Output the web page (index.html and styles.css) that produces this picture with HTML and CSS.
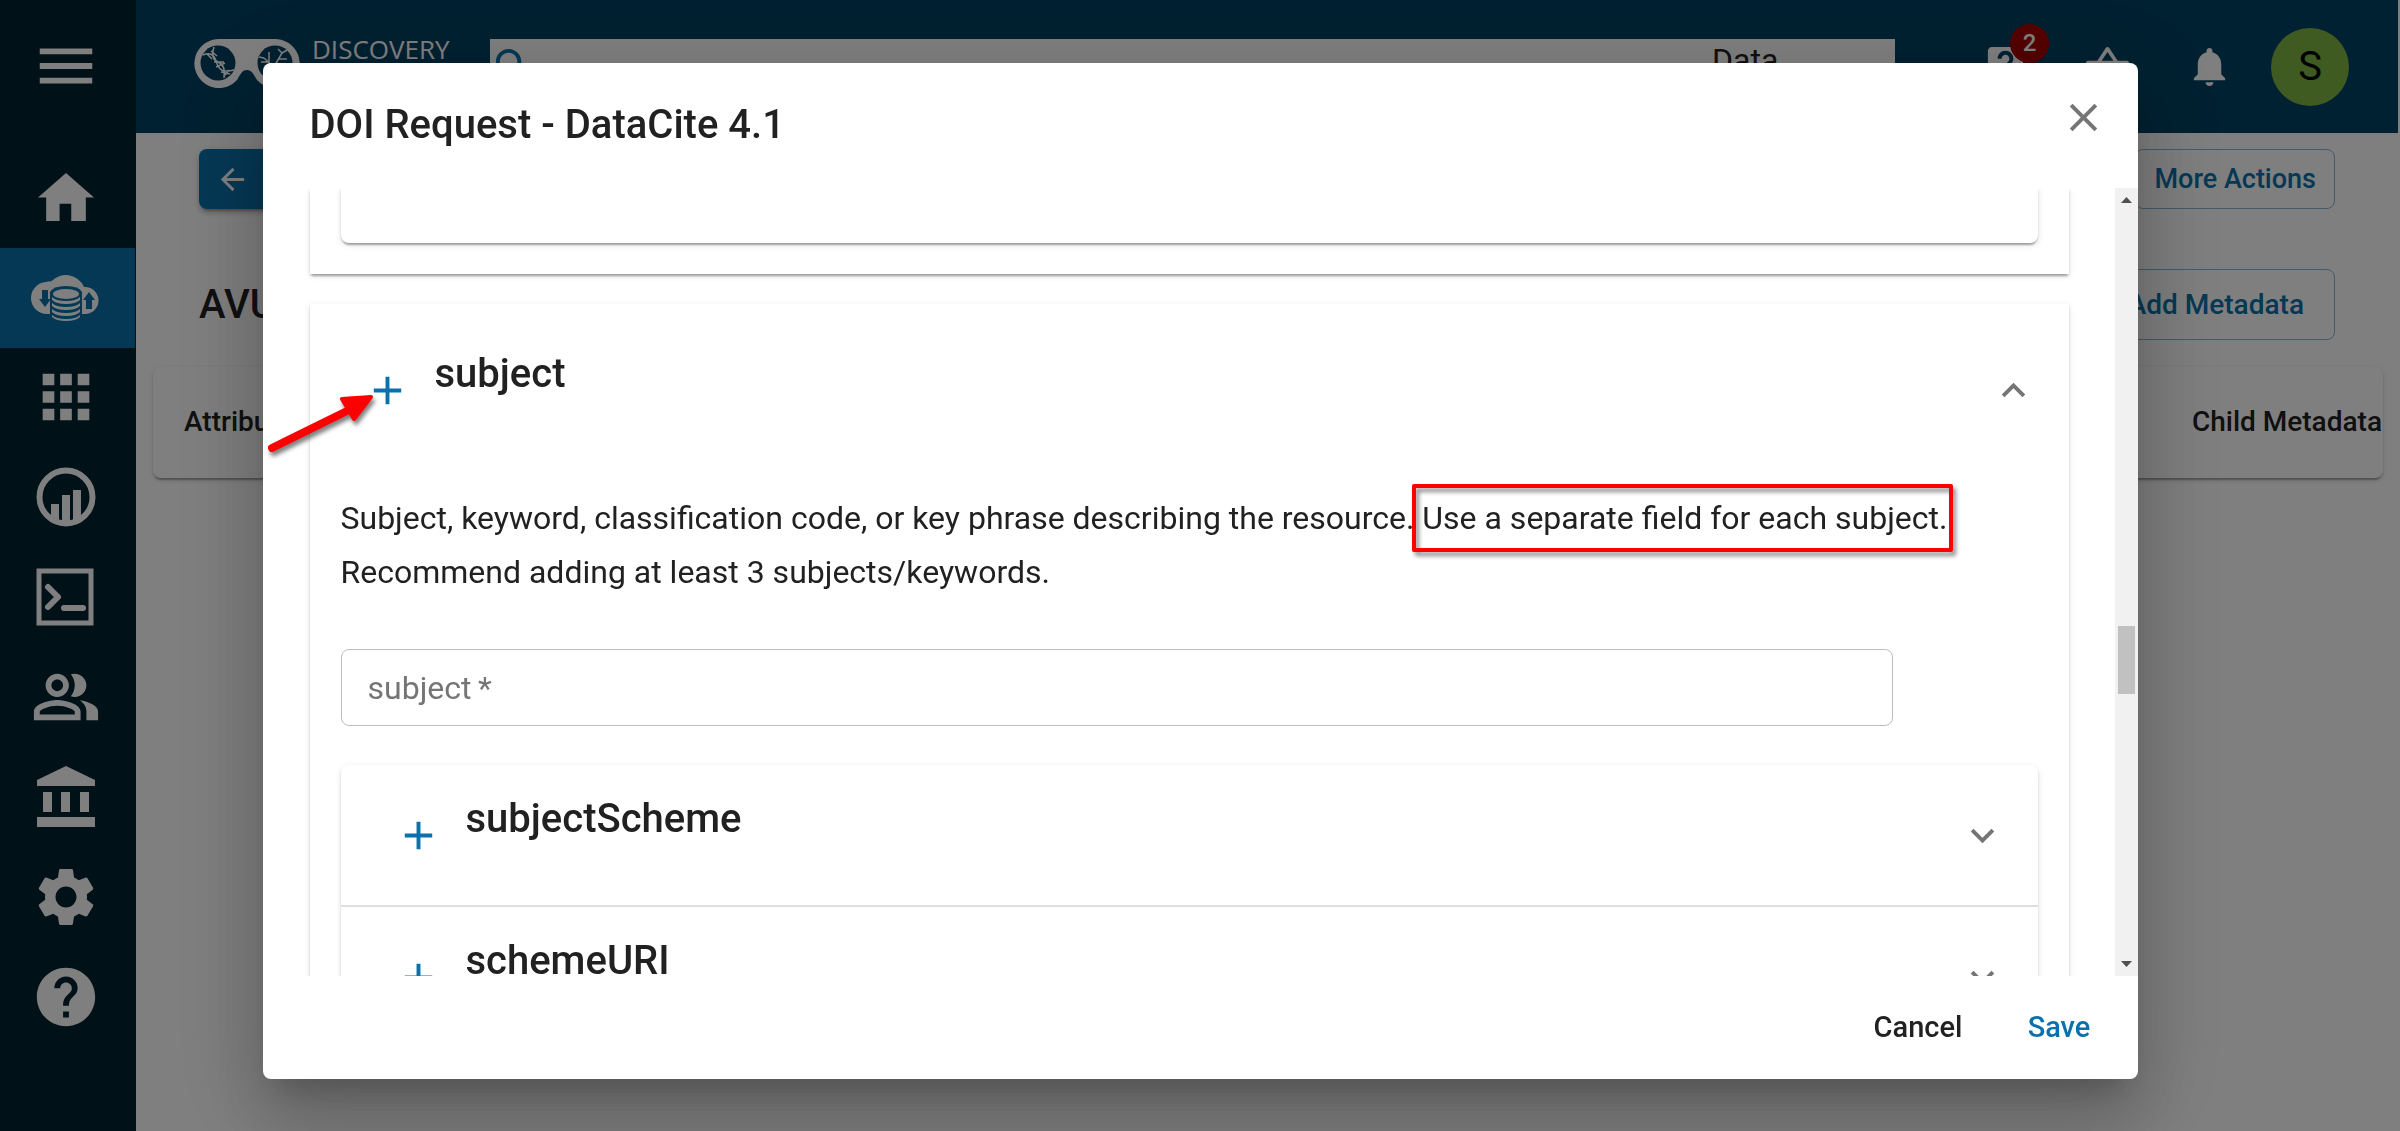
FILE: index.html
```html
<!DOCTYPE html>
<html lang="en">
<head>
<meta charset="utf-8">
<title>DOI Request - DataCite 4.1</title>
<link rel="stylesheet" href="styles.css">
</head>
<body>
<div class="app">
  <nav class="sidebar" aria-label="Main">
    <button class="menu-button" aria-label="Menu"><svg class="nav-icon" viewBox="0 0 24 24"><path d="M3 18h18v-2H3v2zm0-5h18v-2H3v2zm0-7v2h18V6H3z"/></svg></button>
    <a class="nav-link" href="#home" aria-label="Home"><svg class="nav-icon" viewBox="0 0 24 24"><path d="M9.8 20.2v-5.9h4v5.9h5v-8h2.8L12 3.8 2.4 12.2h2.8v8z"/></svg></a>
    <a class="nav-link active" href="#data" aria-label="Data"><svg class="nav-icon" viewBox="0 0 70 70">
      <path d="M17 52A16 16 0 0 1 15 20Q18 19 20 19.500A20 20 0 0 1 53 25A13.500 13.500 0 0 1 55 52Z"/>
      <g class="cut"><path d="M11 28h6v9h3l-6 8-6-8h3zM55 47h6v-9h3l-6-8-6 8h3z"/><path d="M19 30q3-6 16-6t16 6v23q-3 6-16 6t-16-6z"/></g>
      <ellipse cx="35" cy="32" rx="13" ry="5"/>
      <path d="M21 35q4 4 14 4t14-4v3q-4 4-14 4t-14-4zM21 41q4 4 14 4t14-4v3q-4 4-14 4t-14-4zM21 47q4 4 14 4t14-4v3q-4 4-14 4t-14-4zM21 53q4 4 14 4t14-4v2q-4 4-14 4t-14-4z"/></svg></a>
    <a class="nav-link" href="#apps" aria-label="Apps"><svg class="nav-icon" viewBox="0 0 24 24"><path d="M4 8h4V4H4v4zm6 12h4v-4h-4v4zm-6 0h4v-4H4v4zm0-6h4v-4H4v4zm6 0h4v-4h-4v4zm6-10v4h4V4h-4zm-6 4h4V4h-4v4zm6 6h4v-4h-4v4zm0 6h4v-4h-4v4z"/></svg></a>
    <a class="nav-link" href="#analyses" aria-label="Analyses"><svg class="nav-icon" viewBox="0 0 70 70"><circle cx="35" cy="35" r="26.500" fill="none" stroke="#fff" stroke-width="6"/><path d="M20 42h8v16l-8-4zM31 33h8v28h-8zM42 28h8v26l-8 5z"/></svg></a>
    <a class="nav-link" href="#vice" aria-label="Terminal"><svg class="nav-icon" viewBox="0 0 70 70"><g fill="none" stroke="#fff" stroke-width="5"><path d="M8 9h52v52H8z"/><path d="M17 25l10 10-10 10M33 46h19" stroke-width="6" stroke-linecap="round" stroke-linejoin="round"/></g></svg></a>
    <a class="nav-link" href="#teams" aria-label="Teams"><svg class="nav-icon" viewBox="0 0 24 24"><path d="M16.670 13.130C18.040 14.060 19 15.320 19 17v3h4v-3c0-2.180-3.570-3.470-6.330-3.870zM15 12c2.210 0 4-1.790 4-4s-1.790-4-4-4c-.47 0-.91.1-1.330.24C14.500 5.270 15 6.580 15 8s-.5 2.730-1.330 3.760c.42.140.86.240 1.330.240zM9 12c2.210 0 4-1.790 4-4s-1.790-4-4-4-4 1.790-4 4 1.790 4 4 4zm0-6c1.100 0 2 .9 2 2s-.9 2-2 2-2-.9-2-2 .9-2 2-2zM9 13c-2.670 0-8 1.340-8 4v3h16v-3c0-2.660-5.330-4-8-4zm6 5H3v-.99C3.200 16.290 6.300 15 9 15s5.800 1.290 6 2v1z"/></svg></a>
    <a class="nav-link" href="#collections" aria-label="Collections"><svg class="nav-icon" viewBox="0 0 70 70"><path d="M35 4L64 18v6H6v-6zM12 30h9v20h-9zM30 30h9v20h-9zM49 30h9v20h-9zM6 55h58v10H6z"/></svg></a>
    <a class="nav-link" href="#settings" aria-label="Settings"><svg class="nav-icon" viewBox="0 0 24 24"><path d="M19.140 12.940c.04-.3.060-.61.060-.94 0-.32-.02-.64-.07-.94l2.030-1.580c.18-.14.230-.41.120-.61l-1.920-3.320c-.12-.22-.37-.29-.59-.22l-2.390.96c-.5-.38-1.030-.7-1.620-.94l-.36-2.540c-.04-.24-.24-.41-.48-.41h-3.840c-.24 0-.43.170-.47.410l-.36 2.540c-.59.240-1.130.57-1.620.94l-2.390-.96c-.22-.08-.47 0-.59.220L2.740 8.870c-.12.210-.08.470.120.610l2.030 1.580c-.05.3-.09.63-.09.940s.02.640.070.940l-2.030 1.580c-.18.140-.23.410-.12.610l1.920 3.320c.12.220.37.290.59.220l2.390-.96c.5.380 1.030.7 1.620.94l.36 2.540c.05.240.24.410.48.410h3.840c.24 0 .44-.17.47-.41l.36-2.540c.59-.24 1.130-.56 1.620-.94l2.390.96c.22.080.47 0 .59-.22l1.920-3.320c.12-.22.070-.47-.12-.61l-2.010-1.580zM12 15.600c-1.980 0-3.600-1.620-3.600-3.600s1.620-3.600 3.600-3.600 3.600 1.620 3.600 3.600-1.620 3.600-3.600 3.600z"/></svg></a>
    <a class="nav-link" href="#help" aria-label="Help"><svg class="nav-icon" viewBox="0 0 24 24"><path d="M12 2C6.480 2 2 6.480 2 12s4.480 10 10 10 10-4.480 10-10S17.520 2 12 2zm1 17h-2v-2h2v2zm2.070-7.750l-.9.920C13.450 12.900 13 13.500 13 15h-2v-.5c0-1.100.45-2.100 1.170-2.830l1.240-1.260c.37-.36.590-.86.590-1.410 0-1.100-.9-2-2-2s-2 .9-2 2H8c0-2.210 1.790-4 4-4s4 1.790 4 4c0 .88-.36 1.680-.93 2.250z"/></svg></a>
  </nav>

  <div class="page">
    <header class="topbar">
      <a class="brand" href="#" aria-label="Discovery">
        <svg class="brand-mark" viewBox="0 0 106 49">
          <path fill="#fff" d="M25 0H81A24.500 24.500 0 1 1 63 41C60 36 58 31 53 31S46 36 43 41A24.500 24.500 0 1 1 25 0Z"/>
          <circle class="lens" cx="24" cy="24" r="17.500"/><circle class="lens" cx="81" cy="24" r="17.500"/>
          <g fill="none" stroke="#fff" stroke-width="1.500"><path d="M9 16Q19 12 22 22T31 32T40 31M20 8Q16 20 24 23T30 39M13 15l5 5M17 12l6 5M20 23l10 0M22 28l9-4M27 33l9 2M30 37l5-6"/><path d="M81 40V25M81 29L70 19M75 23V13M75 23H67M81 26L88 14M85 20h8M88 14l-4-4M88 14l5-3M81 33l11-8M70 19l-5-1"/></g>
        </svg>
        <span class="brand-name">DISCOVERY</span>
      </a>
      <div class="search">
        <svg class="icon search-icon" viewBox="0 0 24 24"><path d="M15.500 14h-.79l-.28-.27C15.410 12.590 16 11.110 16 9.500 16 5.910 13.090 3 9.500 3S3 5.910 3 9.500 5.910 16 9.500 16c1.610 0 3.090-.59 4.230-1.570l.27.280v.79l5 4.990L20.490 19l-4.990-5zm-6 0C7.010 14 5 11.990 5 9.500S7.010 5 9.500 5 14 7.010 14 9.500 11.990 14 9.500 14z"/></svg>
        <input class="search-input" type="search" aria-label="Search">
        <select class="search-scope" aria-label="Search in"><option>Data</option></select>
      </div>
      <div class="actions">
        <button class="icon-button" aria-label="Support"><svg class="icon" viewBox="0 0 24 24"><path d="M19 2H5c-1.110 0-2 .9-2 2v14c0 1.100.89 2 2 2h4l3 3 3-3h4c1.100 0 2-.9 2-2V4c0-1.100-.9-2-2-2zm-6 16h-2v-2h2v2zm2.070-7.750l-.9.920C13.450 11.900 13 12.500 13 14h-2v-.5c0-1.100.45-2.100 1.170-2.830l1.240-1.260c.37-.36.590-.86.590-1.410 0-1.100-.9-2-2-2s-2 .9-2 2H8c0-2.210 1.790-4 4-4s4 1.790 4 4c0 .88-.36 1.680-.93 2.250z"/></svg><span class="badge">2</span></button>
        <button class="icon-button" aria-label="Bag"><svg class="icon" viewBox="0 0 24 24"><path d="M17.210 9l-4.380-6.560c-.19-.28-.51-.42-.83-.42-.32 0-.64.140-.83.430L6.790 9H2c-.55 0-1 .45-1 1 0 .09.010.18.040.27l2.540 9.270c.23.840 1 1.460 1.920 1.460h13c.92 0 1.690-.62 1.930-1.460l2.540-9.270L23 10c0-.55-.45-1-1-1h-4.790zM9 9l3-4.400L15 9H9zm3 8c-1.100 0-2-.9-2-2s.9-2 2-2 2 .9 2 2-.9 2-2 2z"/></svg></button>
        <button class="icon-button" aria-label="Notifications"><svg class="icon" viewBox="0 0 24 24"><path d="M12 22c1.100 0 2-.9 2-2h-4c0 1.100.89 2 2 2zm6-6v-5c0-3.070-1.640-5.640-4.500-6.320V4c0-.83-.67-1.500-1.500-1.500s-1.500.67-1.500 1.500v.68C7.630 5.360 6 7.920 6 11v5l-2 2v1h16v-1l-2-2z"/></svg></button>
        <button class="avatar">S</button>
      </div>
    </header>

    <main class="content">
      <div class="row">
        <button class="back" aria-label="Back"><svg viewBox="0 0 24 24"><path d="M20 11H7.830l5.590-5.590L12 4l-8 8 8 8 1.410-1.410L7.830 13H20v-2z"/></svg></button>
        <button class="outlined small">More Actions</button>
      </div>
      <div class="row">
        <h1 class="heading">AVUs</h1>
        <button class="outlined">Add Metadata</button>
      </div>
      <table class="avus">
        <tr><th scope="col">Attribute</th><th scope="col" class="last">Child Metadata</th></tr>
      </table>
    </main>
  </div>
</div>

<div class="backdrop">
  <section class="dialog" role="dialog" aria-labelledby="dialog-title">
    <header class="dialog-head">
      <h2 class="heading dialog-title" id="dialog-title">DOI Request - DataCite 4.1</h2>
      <button class="round" aria-label="Close"><svg class="icon gray" viewBox="0 0 24 24"><path d="M19 6.410L17.590 5 12 10.590 6.410 5 5 6.410 10.590 12 5 17.590 6.410 19 12 13.410 17.590 19 19 17.590 13.410 12z"/></svg></button>
    </header>

    <div class="dialog-body">
      <div class="scroller">
        <div class="card card-end"><div class="card nested-end"></div></div>

        <div class="card">
          <div class="summary expanded">
            <button class="round" aria-label="Add subject"><svg class="icon blue" viewBox="0 0 24 24"><path d="M19 13h-6v6h-2v-6H5v-2h6V5h2v6h6v2z"/></svg></button>
            <h3 class="heading">subject</h3>
            <svg class="icon gray" viewBox="0 0 24 24"><path d="M12 8l-6 6 1.410 1.410L12 10.830l4.590 4.580L18 14z"/></svg>
          </div>
          <div class="details">
            <p class="help">Subject, keyword, classification code, or key phrase describing the resource. <mark class="callout">Use a separate field for each subject.</mark><br>Recommend adding at least 3 subjects/keywords.</p>
            <div class="field">
              <input class="field-input" id="subject" type="text" required>
              <label class="field-label" for="subject">subject&thinsp;*</label>
            </div>
            <div class="card nested">
              <div class="summary">
                <button class="round" aria-label="Add subjectScheme"><svg class="icon blue" viewBox="0 0 24 24"><path d="M19 13h-6v6h-2v-6H5v-2h6V5h2v6h6v2z"/></svg></button>
                <h3 class="heading">subjectScheme</h3>
                <svg class="icon gray" viewBox="0 0 24 24"><path d="M16.590 8.590L12 13.170 7.410 8.590 6 10l6 6 6-6z"/></svg>
              </div>
              <div class="summary">
                <button class="round" aria-label="Add schemeURI"><svg class="icon blue" viewBox="0 0 24 24"><path d="M19 13h-6v6h-2v-6H5v-2h6V5h2v6h6v2z"/></svg></button>
                <h3 class="heading">schemeURI</h3>
                <svg class="icon gray" viewBox="0 0 24 24"><path d="M16.590 8.590L12 13.170 7.410 8.590 6 10l6 6 6-6z"/></svg>
              </div>
            </div>
          </div>
        </div>
      </div>
      <div class="scrollbar" aria-hidden="true">
        <svg class="scroll-arrow" viewBox="0 0 23 30"><path d="M6 15h11l-5.500-6z"/></svg>
        <div class="track"><div class="thumb"></div></div>
        <svg class="scroll-arrow" viewBox="0 0 23 30"><path d="M6 15h11l-5.500 6z"/></svg>
      </div>
    </div>

    <footer class="dialog-foot">
      <button class="text-button">Cancel</button>
      <button class="text-button primary">Save</button>
    </footer>

    <svg class="pointer" viewBox="0 0 120 74"><path d="M9 58L86 20" stroke="#f00" stroke-width="8" stroke-linecap="round"/><path d="M79 9L108 7L91 29Z" fill="#f00" stroke="#f00" stroke-width="4" stroke-linejoin="round"/></svg>
  </section>
</div>
</body>
</html>
```

FILE: styles.css
```css
:root {
  --blue: #0971ab;
  --ink: #212121;
  --gray: #757575;
  --lift: 0 4px 2px -2px rgba(0, 0, 0, .2), 0 2px 2px rgba(0, 0, 0, .14), 0 2px 6px rgba(0, 0, 0, .12);
}

* { box-sizing: border-box; }

body {
  margin: 0;
  overflow: hidden;
  color: var(--ink);
  background: #fff;
  font: 32px/54px Roboto, "Liberation Sans", sans-serif;
}

button, input, select { font: inherit; color: inherit; margin: 0; border: 0; background: none; }
button { padding: 0; cursor: pointer; }
h1, h2, h3, p { margin: 0; }

.heading { font-size: 40px; line-height: 62px; font-weight: 500; }

.icon { width: 47px; height: 47px; flex: none; fill: #fff; display: block; }
.gray { fill: var(--gray); }
.blue { fill: var(--blue); }

/* App shell */
.app { display: flex; min-height: 100vh; }

.sidebar { width: 136px; flex: none; background: #002230; }
.menu-button { display: flex; align-items: center; height: 133px; padding: 0 0 2px 31px; margin-bottom: 15px; }
.nav-link { display: flex; align-items: center; height: 100px; padding: 0 0 2px 31px; margin-right: 1px; }
.nav-icon { width: 70px; height: 70px; fill: #fff; display: block; }
.active { background: var(--blue); }
.cut { fill: var(--blue); }

.page { flex: 1; min-width: 0; }

.topbar {
  display: flex;
  align-items: center;
  height: 133px;
  margin-right: 2px;
  padding: 0 49px 0 58px;
  background: #004263;
}
.brand { display: flex; gap: 12px; width: 296px; height: 55px; color: #fff; text-decoration: none; }
.brand-mark { width: 106px; height: 49px; flex: none; }
.lens { fill: #004263; }
.brand-name { font: 26px/20px "Open Sans", "Noto Sans", sans-serif; }

.search { display: flex; flex: 1; height: 55px; margin-right: 63px; background: #fff; align-items: center; }
.search-icon { fill: var(--blue); }
.search-input { flex: 1; min-width: 0; }
.search-scope { width: 183px; height: 43px; align-self: flex-start; appearance: none; line-height: 43px; }

.actions { display: flex; align-items: center; gap: 8px; }
.icon-button { position: relative; width: 94px; height: 94px; display: grid; place-items: center; }
.badge {
  position: absolute;
  top: 4px;
  right: 3px;
  width: 39px;
  height: 39px;
  border-radius: 50%;
  background: #a00;
  color: #fff;
  font-size: 24px;
  font-weight: 500;
  line-height: 39px;
}
.avatar { width: 78px; height: 78px; margin-left: 7px; border-radius: 50%; background: #7eb642; color: #000; font-size: 40px; }

/* Metadata listing */
.content { display: flex; flex-direction: column; padding: 16px 17px 0; }
.row { display: flex; justify-content: space-between; align-items: center; margin-bottom: 60px; padding: 0 48px 0 46px; }
.row + .row { margin-bottom: 27px; }
.back { display: flex; align-items: center; width: 130px; height: 60px; padding-left: 16px; border-radius: 8px; background: var(--blue); box-shadow: 0 6px 2px -4px rgba(0, 0, 0, .2), 0 4px 4px rgba(0, 0, 0, .14), 0 2px 10px rgba(0, 0, 0, .12); }
.back svg { width: 35px; height: 35px; fill: #fff; }
.outlined { height: 71px; padding: 0 30px; border: 1px solid #84b8d5; border-radius: 8px; color: var(--blue); font-size: 28px; font-weight: 500; }
.outlined.small { height: 60px; padding: 0 18px; font-size: 27px; }

.avus { width: 100%; height: 111px; border-spacing: 0; border-radius: 8px; box-shadow: var(--lift); }
.avus th { padding: 0 0 2px 31px; text-align: left; font-size: 28px; font-weight: 500; }
.avus .last { padding: 0 1px 2px 0; text-align: right; }

/* Dialog */
.backdrop { position: fixed; inset: 0; display: flex; justify-content: center; padding: 63px 63px 52px; background: rgba(0, 0, 0, .5); }
.dialog {
  position: relative;
  display: flex;
  flex-direction: column;
  width: 100%;
  max-width: 1875px;
  border-radius: 8px;
  background: #fff;
  box-shadow: 0 22px 30px -14px rgba(0, 0, 0, .2), 0 47px 74px 6px rgba(0, 0, 0, .14), 0 18px 90px 16px rgba(0, 0, 0, .12);
}
.dialog-head { display: flex; justify-content: space-between; padding: 7px 7px 24px 47px; }
.dialog-title { margin-top: 24px; }
.round { display: grid; place-items: center; width: 94px; height: 94px; flex: none; border-radius: 50%; }

.dialog-body { display: flex; flex: 1; min-height: 0; }
.scroller { flex: 1; min-width: 0; overflow: hidden; padding: 0 46px 0 47px; }

.card { background: #fff; box-shadow: var(--lift); }
.card-end { margin-bottom: 30px; padding: 0 31px 31px; }
.nested-end { height: 55px; border-radius: 0 0 8px 8px; }
.nested { border-radius: 8px; }

.summary { display: flex; align-items: center; padding: 23px 32px 23px 31px; }
.summary .heading { flex: 1; align-self: flex-start; }
.summary + .summary { border-top: 2px solid #dedede; }
.summary.expanded { padding-top: 39px; padding-bottom: 39px; }

.details { padding: 15px 31px; }
.help { margin-bottom: 50px; }
.callout { position: relative; color: inherit; background: none; }
.callout::before {
  content: "";
  position: absolute;
  inset: -15px -6px -15px -10px;
  border: 4px solid #f00;
  border-radius: 2px;
  filter: drop-shadow(3px 4px 2px rgba(0, 0, 0, .45));
}

.field { display: grid; width: calc(100% - 145px); margin-bottom: 39px; }
.field-input, .field-label { grid-area: 1 / 1; }
.field-input { height: 77px; padding: 0 27px; border: 1px solid #bdbdbd; border-radius: 8px; }
.field-label { align-self: center; justify-self: start; padding-left: 27px; color: var(--gray); }

.scrollbar { display: flex; flex-direction: column; width: 23px; background: #f1f1f1; }
.scroll-arrow { width: 23px; height: 30px; fill: #505050; }
.track { display: grid; grid-template-rows: 408fr 68fr 252fr; flex: 1; padding: 0 3px; }
.thumb { grid-row: 2; background: #c1c1c1; }

.dialog-foot { display: flex; justify-content: flex-end; gap: 16px; padding: 15px 16px 17px; }
.text-button { min-width: 125px; height: 71px; font-size: 29px; font-weight: 500; }
.primary { color: var(--blue); }

/* Arrow drawn over the add button */
.pointer { position: absolute; left: 0; top: 327px; width: 120px; height: 74px; filter: drop-shadow(2px 4px 2px rgba(0, 0, 0, .5)); }
```
